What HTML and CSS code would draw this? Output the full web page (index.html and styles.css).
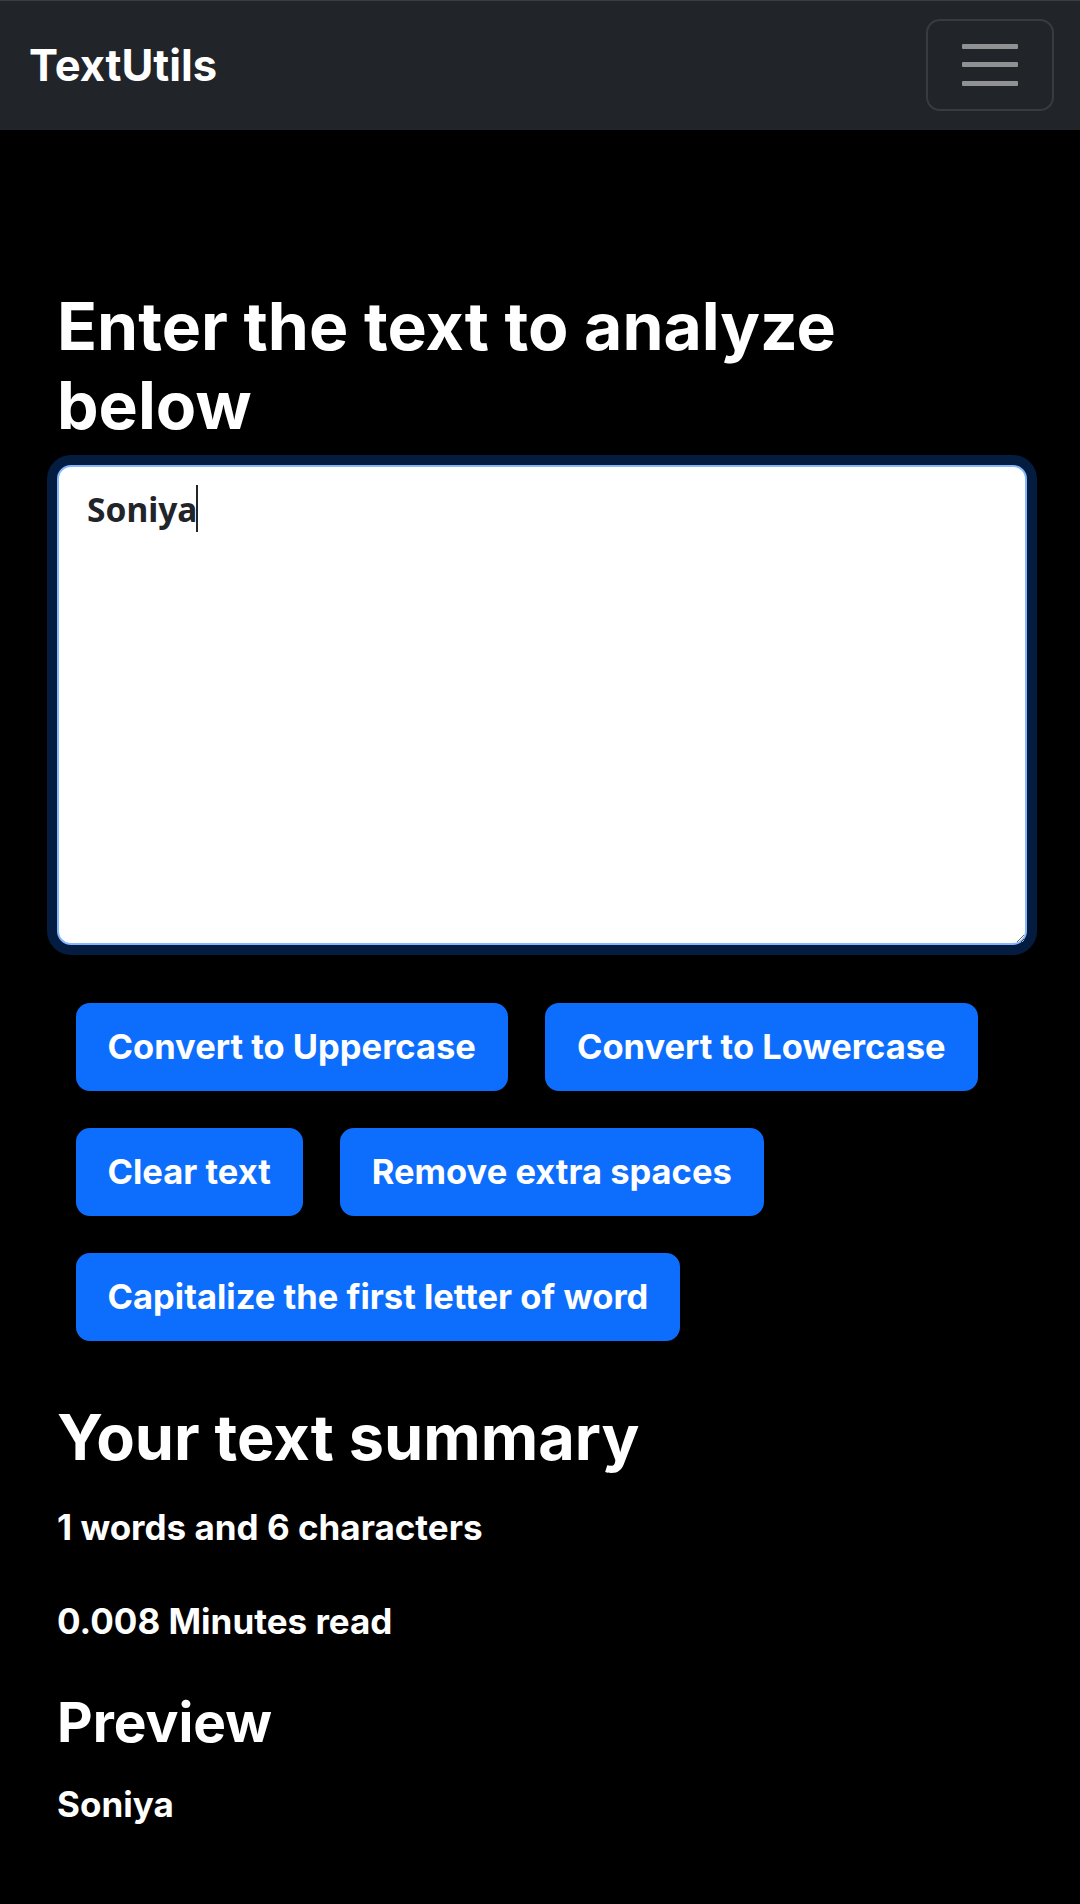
FILE: index.html
```html
<!DOCTYPE html>
<html lang="en">
<head>
<meta charset="utf-8">
<title>TextUtils</title>
<link rel="stylesheet" href="styles.css">
</head>
<body>
<nav class="navbar">
  <a class="brand" href="#">TextUtils</a>
  <button class="toggler" type="button" aria-label="Toggle navigation">
    <span class="bar"></span><span class="bar"></span><span class="bar"></span>
  </button>
</nav>
<main class="container">
  <h1 class="heading">Enter the text to analyze below</h1>
  <div class="editor">
    <textarea class="box" rows="8">Soniya</textarea>
    <span class="caret"></span>
  </div>
  <div class="actions">
    <button class="btn" type="button">Convert to Uppercase</button>
    <button class="btn" type="button">Convert to Lowercase</button>
    <button class="btn" type="button">Clear text</button>
    <button class="btn" type="button">Remove extra spaces</button>
    <button class="btn" type="button">Capitalize the first letter of word</button>
  </div>
  <section class="summary">
    <h2 class="summary-title">Your text summary</h2>
    <p class="stat">1 words and 6 characters</p>
    <p class="stat">0.008 Minutes read</p>
    <h3 class="preview-title">Preview</h3>
    <p class="preview">Soniya</p>
  </section>
</main>
</body>
</html>
```
FILE: styles.css
```css
* { box-sizing: border-box; }
html, body { margin: 0; padding: 0; }
body {
  background: #000;
  color: #fff;
  font-family: Inter, "Noto Sans", sans-serif;
  font-weight: 700;
  width: 1080px;
  min-height: 1904px;
}
.navbar {
  height: 130px;
  background: #212529;
  border-top: 1px solid #3a3d41;
  display: flex;
  align-items: center;
  justify-content: space-between;
  padding: 0 26px 0 29px;
}
.brand {
  color: #fff;
  text-decoration: none;
  font-size: 43.5px;
  font-weight: 700;
  line-height: 1.2;
}
.toggler {
  width: 128px;
  height: 92px;
  margin-top: -2px;
  background: transparent;
  border: 2px solid #383b3f;
  border-radius: 14px;
  display: flex;
  flex-direction: column;
  align-items: center;
  justify-content: center;
  gap: 13.5px;
  padding: 0;
}
.bar {
  display: block;
  width: 56px;
  height: 5px;
  border-radius: 1px;
  background: #909193;
}
.container {
  padding: 0 53px 0 57px;
}
.heading {
  margin: 0 0 20px;
  padding-top: 157px;
  max-width: 880px;
  font-size: 66px;
  font-weight: 700;
  line-height: 79px;
}
.editor {
  position: relative;
  margin-bottom: 39.5px;
}
.box {
  display: block;
  width: 970px;
  height: 480px;
  border: 2px solid #86b7fe;
  border-radius: 14px;
  box-shadow: 0 0 0 10px rgba(13, 110, 253, 0.25);
  outline: none;
  background: #fff;
  color: #212529;
  font-family: "Noto Sans", sans-serif;
  font-weight: 700;
  font-size: 33.5px;
  line-height: 50px;
  padding: 17px 28px;
  resize: vertical;
}
.caret {
  position: absolute;
  left: 139px;
  top: 20px;
  width: 2px;
  height: 47px;
  background: #212529;
}
.actions {
  display: flex;
  flex-wrap: wrap;
}
.btn {
  margin: 18.5px;
  background: #0d6efd;
  border: 2px solid #0d6efd;
  border-radius: 14px;
  color: #fff;
  font-family: Inter, "Noto Sans", sans-serif;
  font-weight: 700;
  font-size: 34.5px;
  line-height: 52px;
  padding: 16px 30px;
}
.summary-title {
  margin: 40px 0 26px;
  font-size: 63px;
  font-weight: 700;
  line-height: 1.2;
}
.stat {
  margin: 0 0 41.5px;
  font-size: 35px;
  line-height: 1.5;
}
.preview-title {
  margin: 1px 0 23px;
  font-size: 55px;
  font-weight: 700;
  line-height: 1.2;
}
.preview {
  margin: 0;
  font-size: 35px;
  line-height: 1.5;
}
```
